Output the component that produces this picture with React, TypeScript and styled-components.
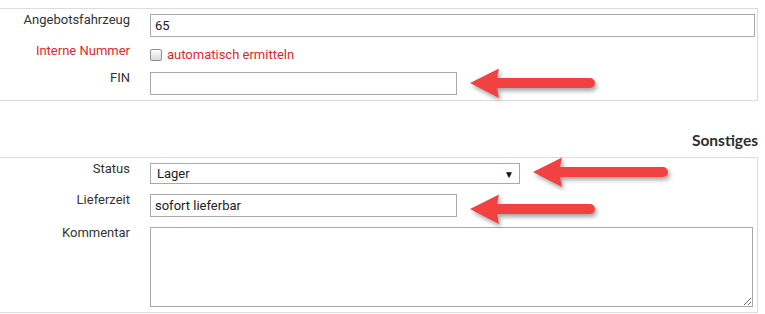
import React from 'react';
import styled, { createGlobalStyle } from 'styled-components';

const GlobalStyle = createGlobalStyle`
  html, body {
    margin: 0;
    padding: 0;
    background: #ffffff;
  }
  body {
    font-family: Roboto, "Liberation Sans", Arial, sans-serif;
    font-size: 13px;
    color: #333333;
  }
`;

const Page = styled.div`
  width: 765px;
  padding-top: 8px;
`;

const Panel = styled.div`
  width: 757px;
  border: 1px solid #dcdcdc;
  border-left: none;
  padding: 5px 0 5px 0;
  display: flex;
  flex-direction: column;
  gap: ${({ $gap }: { $gap: number }) => $gap}px;
`;

const SectionTitle = styled.h3`
  margin: 0;
  width: 758px;
  text-align: right;
  font-family: Lato, "Open Sans", sans-serif;
  font-weight: 700;
  font-size: 15.5px;
  line-height: 18px;
  color: #2e2e2e;
  padding: 30px 0 8px 0;
`;

const Row = styled.div`
  display: flex;
  align-items: flex-start;
`;

const Label = styled.label<{ $red?: boolean }>`
  width: 130px;
  flex: none;
  text-align: right;
  margin: -2px 20px 0 0;
  line-height: 16px;
  font-size: 13px;
  color: ${({ $red }) => ($red ? '#e3252d' : '#333333')};
`;

const Field = styled.div`
  display: flex;
  align-items: center;
  flex: 1;
`;

const TextInput = styled.input<{ $width: number }>`
  box-sizing: border-box;
  width: ${({ $width }) => $width}px;
  height: 23px;
  margin: 0;
  padding: 0 4px;
  border: 1px solid #a9a9a9;
  border-radius: 0;
  font-family: Roboto, "Liberation Sans", Arial, sans-serif;
  font-size: 13px;
  color: #222222;
  background: #ffffff;
  outline: none;
`;

const SelectBox = styled.div`
  box-sizing: border-box;
  width: 370px;
  height: 21px;
  border: 1px solid #a9a9a9;
  display: flex;
  align-items: center;
  justify-content: space-between;
  padding: 0 5px 0 6px;
  font-size: 13px;
  color: #222222;
`;

const Caret = styled.span`
  font-size: 10px;
  color: #111111;
  margin-top: 1px;
`;

const TextArea = styled.textarea`
  box-sizing: border-box;
  width: 603px;
  height: 80px;
  margin: 0;
  padding: 3px 4px;
  border: 1px solid #a9a9a9;
  border-radius: 0;
  resize: both;
  font-family: Roboto, "Liberation Sans", Arial, sans-serif;
  font-size: 13px;
  outline: none;
`;

const CheckRow = styled.div`
  display: flex;
  align-items: center;
  height: 19px;
  gap: 5px;
  color: #e3252d;
  font-size: 13px;
`;

const CheckBox = styled.span`
  box-sizing: border-box;
  width: 12px;
  height: 12px;
  border: 1px solid #8f8f8f;
  border-radius: 2px;
  background: linear-gradient(#fdfdfd, #d8d8d8);
  margin-top: 1px;
`;

const ArrowSvg = styled.svg<{ $dy: number }>`
  flex: none;
  margin: -7px 0 -7px 11px;
  overflow: visible;
  transform: translateY(${({ $dy }) => $dy}px);
  filter: drop-shadow(2px 3px 2px rgba(0, 0, 0, 0.35));
`;

function Arrow({ length, dy = 0 }: { length: number; dy?: number }) {
  const h = 34;
  return (
    <ArrowSvg $dy={dy} width={length + 4} height={h} viewBox={`0 0 ${length + 4} ${h}`}>
      <path d={`M2 16 L31 1.5 L29 11 L${length - 3} 11 A5 5 0 0 1 ${length - 3} 21 L29 21 L31 31 Z`} fill="#f24141" />
    </ArrowSvg>
  );
}

export default function App() {
  return (
    <>
      <GlobalStyle />
      <Page>
        <Panel $gap={8}>
          <Row>
            <Label>Angebotsfahrzeug</Label>
            <Field>
              <TextInput $width={605} defaultValue="65" />
            </Field>
          </Row>
          <Row>
            <Label $red>Interne Nummer</Label>
            <CheckRow>
              <CheckBox />
              automatisch ermitteln
            </CheckRow>
          </Row>
          <Row>
            <Label>FIN</Label>
            <Field>
              <TextInput $width={307} defaultValue="" />
              <Arrow length={125} dy={0} />
            </Field>
          </Row>
        </Panel>

        <SectionTitle>Sonstiges</SectionTitle>

        <Panel $gap={10}>
          <Row>
            <Label>Status</Label>
            <Field>
              <SelectBox>
                Lager
                <Caret>▼</Caret>
              </SelectBox>
              <Arrow length={135} dy={-1} />
            </Field>
          </Row>
          <Row>
            <Label>Lieferzeit</Label>
            <Field>
              <TextInput $width={307} defaultValue="sofort lieferbar" />
              <Arrow length={125} dy={4} />
            </Field>
          </Row>
          <Row>
            <Label>Kommentar</Label>
            <Field>
              <TextArea />
            </Field>
          </Row>
        </Panel>
      </Page>
    </>
  );
}
